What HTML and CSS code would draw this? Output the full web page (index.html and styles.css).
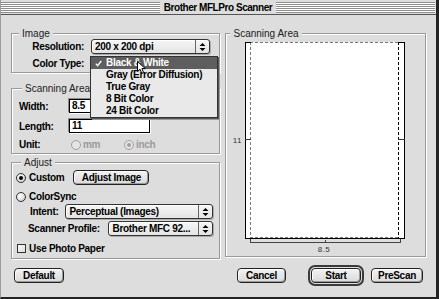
FILE: index.html
```html
<!DOCTYPE html>
<html>
<head>
<meta charset="utf-8">
<link rel="stylesheet" href="styles.css">
</head>
<body>
<div class="window">
  <div class="titlebar">
    <div class="stripes"></div>
    <div class="title">Brother MFLPro Scanner</div>
    <div class="stripes"></div>
  </div>

  <div class="main">
    <div class="left">
      <fieldset class="group g-image">
        <legend>Image</legend>
        <div class="image-grid">
          <span class="lbl">Resolution:</span>
          <div class="popup">
            <span class="popup-text">200 x 200 dpi</span>
            <span class="popup-arrows"><svg width="7" height="10" viewBox="0 0 7 10"><path d="M0.5 4 L3.5 1 L6.5 4 Z M0.5 6 L3.5 9 L6.5 6 Z" fill="#000"/></svg></span>
          </div>
          <span class="lbl">Color Type:</span>
          <div class="popup-slot"></div>
        </div>
      </fieldset>

      <fieldset class="group g-area">
        <legend>Scanning Area</legend>
        <div class="area-grid">
          <span class="lbl-l">Width:</span>
          <div class="field">8.5</div>
          <span class="lbl-l">Length:</span>
          <div class="field">11</div>
          <span class="lbl-l">Unit:</span>
          <div class="units">
            <span class="opt disabled"><span class="radio"></span>mm</span>
            <span class="opt disabled"><span class="radio on"></span>inch</span>
          </div>
        </div>
      </fieldset>

      <fieldset class="group g-adjust">
        <legend>Adjust</legend>
        <div class="adj-row custom-row">
          <span class="opt"><span class="radio on"></span>Custom</span>
          <button class="btn btn-adjust">Adjust Image</button>
        </div>
        <div class="adj-row sync-row">
          <span class="opt"><span class="radio"></span>ColorSync</span>
        </div>
        <div class="adj-row intent-row">
          <span class="lbl-l">Intent:</span>
          <div class="popup popup-intent">
            <span class="popup-text">Perceptual (Images)</span>
            <span class="popup-arrows"><svg width="7" height="10" viewBox="0 0 7 10"><path d="M0.5 4 L3.5 1 L6.5 4 Z M0.5 6 L3.5 9 L6.5 6 Z" fill="#000"/></svg></span>
          </div>
        </div>
        <div class="adj-row profile-row">
          <span class="lbl-l">Scanner Profile:</span>
          <div class="popup popup-profile">
            <span class="popup-text">Brother MFC 92...</span>
            <span class="popup-arrows"><svg width="7" height="10" viewBox="0 0 7 10"><path d="M0.5 4 L3.5 1 L6.5 4 Z M0.5 6 L3.5 9 L6.5 6 Z" fill="#000"/></svg></span>
          </div>
        </div>
        <div class="adj-row photo-row">
          <span class="opt"><span class="check"></span>Use Photo Paper</span>
        </div>
      </fieldset>
    </div>

    <fieldset class="group g-preview">
      <legend>Scanning Area</legend>
      <svg class="preview" width="199" height="216" viewBox="0 0 199 216">
        <rect x="20" y="3" width="158" height="196" fill="#fff"/>
        <g stroke-width="1" fill="none">
          <line x1="24.5" y1="3" x2="24.5" y2="199" stroke="#7a7a7a" stroke-dasharray="3 2"/>
          <line x1="24" y1="3.5" x2="173" y2="3.5" stroke="#7a7a7a" stroke-dasharray="3 2"/>
          <line x1="24" y1="198.5" x2="173" y2="198.5" stroke="#7a7a7a" stroke-dasharray="3 2"/>
          <line x1="172.5" y1="3" x2="172.5" y2="199" stroke="#000" stroke-dasharray="3 2"/>
          <line x1="19.5" y1="3" x2="19.5" y2="200" stroke="#000"/>
          <line x1="178.5" y1="3" x2="178.5" y2="200" stroke="#000"/>
          <line x1="19" y1="199.5" x2="179" y2="199.5" stroke="#000"/>
          <line x1="19" y1="3.5" x2="25" y2="3.5" stroke="#000"/>
          <line x1="172" y1="3.5" x2="179" y2="3.5" stroke="#000"/>
          <line x1="19" y1="100.5" x2="25" y2="100.5" stroke="#333"/>
          <line x1="172" y1="100.5" x2="179" y2="100.5" stroke="#333"/>
          <line x1="24" y1="203.5" x2="175" y2="203.5" stroke="#444"/>
          <line x1="24.5" y1="200" x2="24.5" y2="204" stroke="#444"/>
          <line x1="99.5" y1="201" x2="99.5" y2="204" stroke="#444"/>
          <line x1="174.5" y1="200" x2="174.5" y2="204" stroke="#444"/>
        </g>
        <text class="ruler-text" x="16" y="104" text-anchor="end">11</text>
        <text class="ruler-text" x="98" y="212.5" text-anchor="middle">8.5</text>
      </svg>
    </fieldset>
  </div>

  <div class="footer">
    <button class="btn btn-default">Default</button>
    <button class="btn btn-cancel">Cancel</button>
    <div class="ring"><button class="btn btn-start">Start</button></div>
    <button class="btn btn-prescan">PreScan</button>
  </div>

  <div class="menu">
    <div class="menu-item selected">
      <svg class="checkmark" width="7" height="7" viewBox="0 0 7 7"><path d="M0.8 3.6 L2.6 5.6 L6.3 1" stroke="#fff" stroke-width="1.4" fill="none"/></svg>
      Black &amp; White
    </div>
    <div class="menu-item">Gray (Error Diffusion)</div>
    <div class="menu-item">True Gray</div>
    <div class="menu-item">8 Bit Color</div>
    <div class="menu-item">24 Bit Color</div>
  </div>

  <svg class="cursor" width="10" height="14" viewBox="0 0 10 14">
    <path d="M0.5 0.5 L0.5 10.5 L3 8.2 L4.8 12.3 L6.6 11.5 L4.9 7.6 L8.3 7.6 Z" fill="#fff" stroke="#000" stroke-width="1" stroke-linejoin="miter"/>
  </svg>
</div>
</body>
</html>
```

FILE: styles.css
```css
* { box-sizing: border-box; }

html, body {
  margin: 0;
  padding: 0;
  background: #dddddd;
}

body {
  font-family: "Liberation Sans", Arial, sans-serif;
  font-size: 10px;
  font-weight: bold;
  letter-spacing: -0.3px;
  color: #000;
}

.window {
  position: relative;
  width: 439px;
  height: 299px;
  background: #dddddd;
  border-left: 1px solid #9c9c9c;
  border-right: 3px solid #222;
  border-bottom: 2px solid #222;
  display: flex;
  flex-direction: column;
  overflow: hidden;
}

/* title bar */
.titlebar {
  height: 15px;
  flex: 0 0 15px;
  border-bottom: 1px solid #555;
  display: flex;
  align-items: center;
  padding: 0 1px 0 0;
}

.stripes {
  flex: 1;
  height: 11px;
  background: repeating-linear-gradient(to bottom, #8e8e8e 0 1px, #ffffff 1px 2px);
}

.title {
  padding: 0 4px;
  line-height: 13px;
  letter-spacing: -0.45px;
  white-space: nowrap;
}

/* main area */
.main {
  display: flex;
  gap: 5px;
  padding: 13px 10px 0 10px;
  height: 242px;
  flex: 0 0 242px;
}

.left {
  width: 210px;
  display: flex;
  flex-direction: column;
}

.group {
  margin: 0;
  padding: 0;
  min-width: 0;
  border: 1px solid #999;
  box-shadow: inset 1px 1px 0 #fff, 1px 1px 0 #fff;
}

.group legend {
  font-weight: normal;
  letter-spacing: 0;
  color: #222;
  line-height: 11px;
  padding: 0 3px;
  background: #dddddd;
}

.g-image legend { margin-left: 7px; }
.g-area { margin-top: 10px; }
.g-area legend { margin-left: 10px; }
.g-adjust { margin-top: 3px; padding: 2px 6px 3px 4px; }
.g-adjust legend { margin-left: 5px; }
.g-preview { width: 201px; }
.g-preview legend { margin-left: 4px; }

.lbl { justify-self: end; align-self: center; white-space: nowrap; }
.lbl-l { align-self: center; white-space: nowrap; }

/* image group */
.image-grid {
  display: grid;
  grid-template-columns: 72px 119px;
  grid-template-rows: 15px 14px;
  column-gap: 7px;
  row-gap: 2px;
  padding-bottom: 2px;
}

/* popup menus */
.popup {
  display: flex;
  height: 15px;
  border: 1px solid #333;
  border-radius: 3px;
  background: linear-gradient(#f6f6f6, #e4e4e4);
  box-shadow: inset 1px 1px 0 #fff, 1px 1px 0 #aaa;
}

.popup-text {
  flex: 1;
  padding-left: 3px;
  line-height: 13px;
  white-space: nowrap;
  overflow: hidden;
}

.popup-arrows {
  width: 14px;
  border-left: 1px solid #666;
  display: flex;
  align-items: center;
  justify-content: center;
}

.popup-arrows svg { display: block; }

/* scanning area group */
.area-grid {
  display: grid;
  grid-template-columns: 50px 81px;
  grid-template-rows: 14px 14px 13px;
  row-gap: 6px;
  padding: 5px 0 1px 7px;
}

.area-grid .units { margin-top: -2px; }
.area-grid > :nth-child(5) { margin-top: -2px; }

.field {
  height: 14px;
  background: #fff;
  border: 1px solid #000;
  box-shadow: -1px -1px 0 #8a8a8a, 1px 1px 0 #fff;
  padding-left: 2px;
  line-height: 12px;
}

.units {
  display: grid;
  grid-template-columns: 53px auto;
  padding-left: 2px;
  align-items: center;
}

.opt {
  display: inline-flex;
  align-items: center;
  gap: 3px;
  white-space: nowrap;
}

.opt.disabled { color: #9a9a9a; gap: 2px; }

.radio {
  width: 10px;
  height: 10px;
  border-radius: 50%;
  border: 1px solid #333;
  background: radial-gradient(circle at 35% 35%, #ffffff 0, #e8e8e8 45%, #b8b8b8 100%);
  display: inline-flex;
  align-items: center;
  justify-content: center;
  flex: 0 0 10px;
}

.radio.on::after {
  content: "";
  width: 4px;
  height: 4px;
  border-radius: 50%;
  background: #000;
}

.disabled .radio { border-color: #a0a0a0; background: #e4e4e4; }
.disabled .radio.on::after { background: #a0a0a0; }

.check {
  width: 9px;
  height: 9px;
  border: 1px solid #333;
  background: linear-gradient(135deg, #fafafa, #dcdcdc);
  flex: 0 0 9px;
}

/* adjust group */
.adj-row {
  display: flex;
  align-items: center;
}

.custom-row { height: 15px; gap: 9px; }
.sync-row { height: 13px; margin-top: 5px; }
.intent-row { height: 15px; margin-top: 1px; padding-left: 14px; }
.profile-row { height: 15px; margin-top: 2px; padding-left: 12px; }
.photo-row { height: 13px; margin-top: 6px; padding-left: 1px; }

.popup-intent { flex: 0 0 148px; margin-left: auto; }
.popup-profile { flex: 0 0 105px; margin-left: auto; }

/* buttons */
.btn {
  font: inherit;
  letter-spacing: inherit;
  color: #000;
  height: 15px;
  padding: 0;
  margin: 0;
  border: 1px solid #222;
  border-radius: 4px;
  background: linear-gradient(#f2f2f2, #dadada);
  box-shadow: inset 1px 1px 0 #fff, inset -1px -1px 0 #9a9a9a;
  line-height: 13px;
  text-align: center;
}

.btn-adjust { width: 76px; }

.footer {
  flex: 1;
  display: flex;
  align-items: center;
  padding: 0 13px 3px 13px;
}

.btn-default { width: 50px; }
.btn-cancel { width: 49px; margin-left: auto; margin-right: 22px; }
.ring {
  border: 2px solid #3a3a3a;
  border-radius: 7px;
  padding: 1px;
  background: #dddddd;
}
.btn-start { width: 50px; display: block; }
.btn-prescan { width: 52px; margin-left: 7px; }

/* preview */
.preview { display: block; }
.ruler-text {
  font-family: "Liberation Sans", Arial, sans-serif;
  font-size: 8px;
  font-weight: normal;
  letter-spacing: 0.5px;
  fill: #333;
}

/* open popup menu */
.menu {
  position: absolute;
  left: 89px;
  top: 56px;
  width: 128px;
  background: #e9e9e9;
  border: 1px solid #333;
  box-shadow: 1px 1px 0 #555, 2px 2px 0 #999;
}

.menu-item {
  position: relative;
  height: 12px;
  line-height: 12px;
  padding-left: 15px;
  white-space: nowrap;
}

.menu-item.selected {
  background: #5e5e5e;
  color: #fff;
}

.checkmark {
  position: absolute;
  left: 4px;
  top: 3px;
}

.cursor {
  position: absolute;
  left: 136px;
  top: 61px;
}
```
